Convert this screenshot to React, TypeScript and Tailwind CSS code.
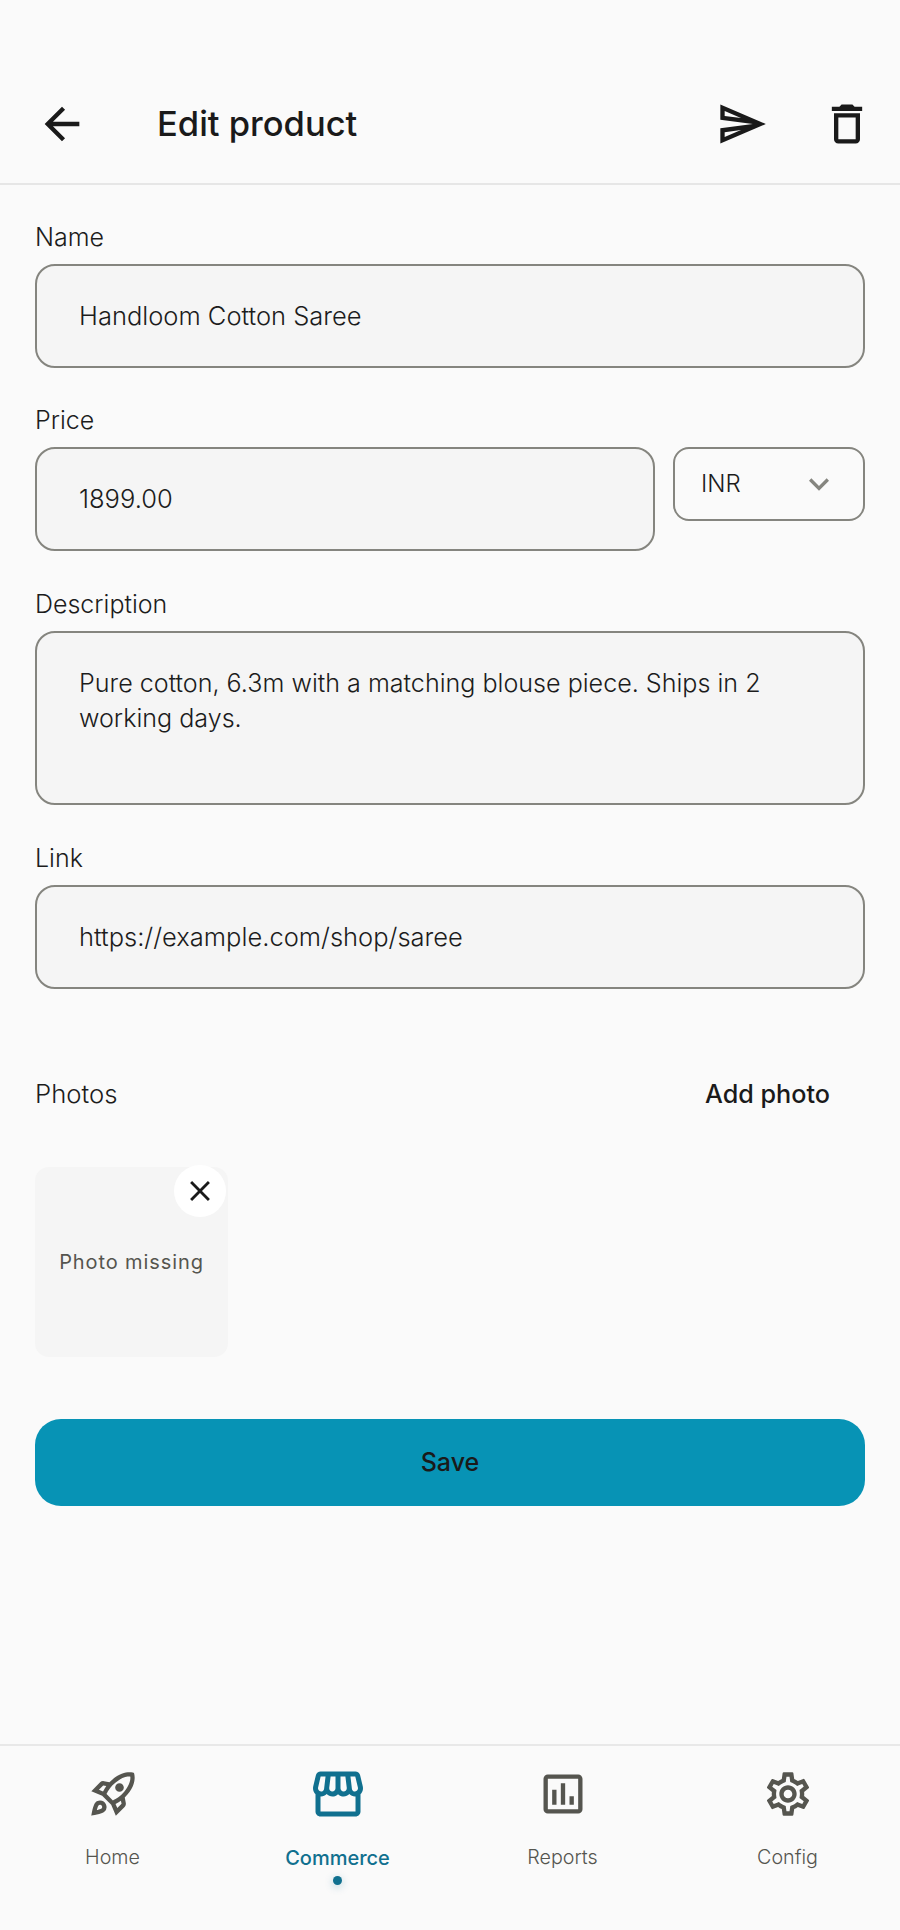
import {
  MdArrowBack,
  MdClose,
  MdExpandMore,
  MdOutlineAssessment,
  MdOutlineDelete,
  MdOutlineRocketLaunch,
  MdOutlineSend,
  MdOutlineSettings,
  MdOutlineStorefront,
} from "react-icons/md";

const NAV_ITEMS = [
  { label: "Home", icon: MdOutlineRocketLaunch, active: false },
  { label: "Commerce", icon: MdOutlineStorefront, active: true },
  { label: "Reports", icon: MdOutlineAssessment, active: false },
  { label: "Config", icon: MdOutlineSettings, active: false },
];

function Label({ children }: { children: string }) {
  return <div className="flex h-[52px] items-center text-[25px] font-light text-[#1c1c1c]">{children}</div>;
}

function Field({ label, value }: { label: string; value: string }) {
  return (
    <div className="flex flex-col">
      <Label>{label}</Label>
      <div className="flex h-[104px] items-center rounded-[20px] border-2 border-[#85857f] bg-[#f5f5f5] px-[42px] pt-[1px] text-[25.5px] font-light text-[#1c1c1c]">
        {value}
      </div>
    </div>
  );
}

export default function App() {
  return (
    <div className="flex h-[1930px] w-[900px] flex-col bg-[#fafafa] font-['Inter',sans-serif]">
      <header className="flex h-[185px] shrink-0 items-center border-b-2 border-[#e6e6e6] pl-[36px] pr-[27px] pt-[64px] text-[#1a1a1a]">
        <MdArrowBack size={52} />
        <h1 className="ml-[69px] flex-1 text-[34.5px] font-medium">Edit product</h1>
        <MdOutlineSend size={52} />
        <MdOutlineDelete size={52} className="ml-[53px]" />
      </header>

      <main className="flex flex-1 flex-col px-[35px] pt-[27px]">
        <Field label="Name" value="Handloom Cotton Saree" />

        <div className="mt-[27px]">
          <Label>Price</Label>
        </div>
        <div className="flex items-start gap-[18px]">
          <div className="flex h-[104px] flex-1 items-center rounded-[20px] border-2 border-[#85857f] bg-[#f5f5f5] px-[42px] pt-[1px] text-[25.5px] font-light text-[#1c1c1c]">
            1899.00
          </div>
          <div className="flex h-[74px] w-[192px] items-center justify-between rounded-[16px] border-2 border-[#85857f] pl-[26px] pr-[24px] text-[24px] font-light text-[#1c1c1c]">
            INR
            <MdExpandMore size={40} className="text-[#85857f]" />
          </div>
        </div>

        <div className="mt-[28px]">
          <Label>Description</Label>
        </div>
        <div className="h-[174px] rounded-[20px] border-2 border-[#85857f] bg-[#f5f5f5] px-[42px] pt-[33px] text-[25.1px] font-light leading-[35px] text-[#1c1c1c]">
          Pure cotton, 6.3m with a matching blouse piece. Ships in 2 working days.
        </div>

        <div className="mt-[28px]">
          <Field label="Link" value="https://example.com/shop/saree" />
        </div>

        <div className="mt-[70px] flex h-[70px] items-center justify-between pr-[35px]">
          <span className="text-[25.7px] font-light text-[#1c1c1c]">Photos</span>
          <span className="pt-[1px] text-[25.2px] font-medium text-[#1a1a1a]">Add photo</span>
        </div>

        <div className="relative mt-[38px] flex h-[190px] w-[193px] items-center justify-center rounded-[14px] bg-[#f5f5f5] text-[20px] font-normal tracking-[0.9px] text-[#55554f]">
          Photo missing
          <div className="absolute right-[2px] top-[-2px] flex h-[52px] w-[52px] items-center justify-center rounded-full bg-white text-[#1a1a1a]">
            <MdClose size={34} />
          </div>
        </div>

        <button
          type="button"
          className="mt-[62px] flex h-[87px] items-center justify-center rounded-[26px] bg-[#0793b5] text-[25px] font-medium text-[#1a1a1a]"
        >
          Save
        </button>
      </main>

      <nav className="flex h-[186px] shrink-0 border-t-2 border-[#e8e8e8]">
        {NAV_ITEMS.map((item) => (
          <div key={item.label} className="relative flex flex-1 flex-col items-center pt-[22px]">
            <item.icon
              size={item.active ? 60 : 52}
              className={item.active ? "-my-[4px] text-[#10708f]" : "text-[#55554f]"}
            />
            <span
              className={
                item.active
                  ? "mt-[23px] text-[20px] font-medium text-[#10708f]"
                  : "mt-[23px] text-[19.7px] font-light text-[#55554f]"
              }
            >
              {item.label}
            </span>
            {item.active && (
              <span className="mt-[3px] h-[9px] w-[9px] rounded-full bg-[#10708f] shadow-[0_2px_8px_rgba(16,112,143,0.3)]" />
            )}
          </div>
        ))}
      </nav>
    </div>
  );
}
